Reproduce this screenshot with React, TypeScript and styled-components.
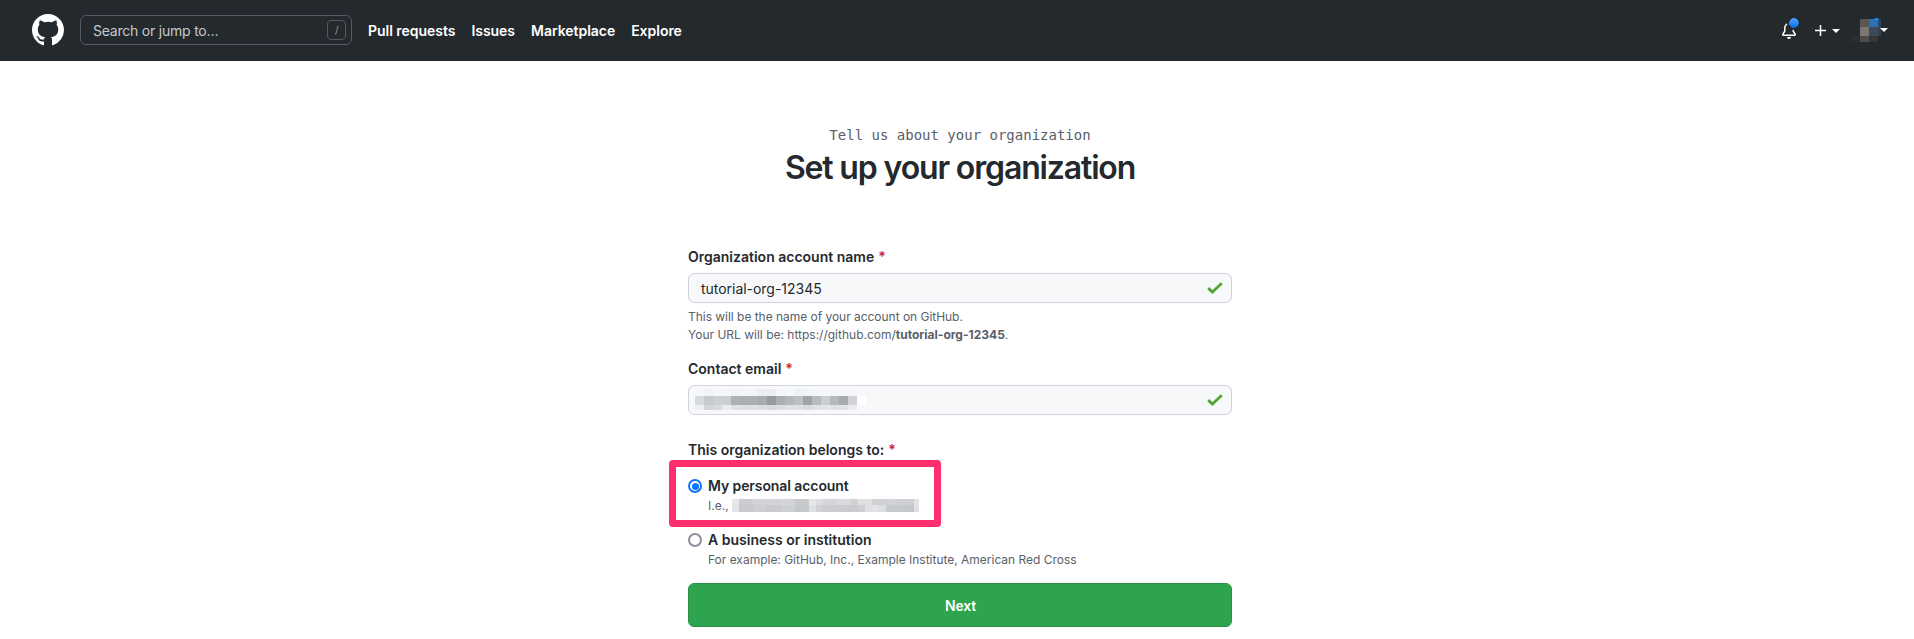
import React from "react";
import styled, { createGlobalStyle } from "styled-components";

const GlobalStyle = createGlobalStyle`
  *, *::before, *::after { box-sizing: border-box; }
  html, body { height: 100%; }
  body {
    margin: 0;
    background: #fff;
    color: #24292e;
    font-family: Inter, "Liberation Sans", sans-serif;
    font-size: 14px;
    line-height: 21px;
    overflow: hidden;
  }
`;

const Header = styled.header`
  display: flex;
  align-items: center;
  height: 61px;
  padding: 0 26px 1px 32px;
  background: #24292e;
  color: #fff;
`;

const Logo = styled.svg`
  display: block;
  width: 32px;
  height: 32px;
  margin-right: 16px;
  fill: #fff;
`;

const SearchBox = styled.div`
  display: flex;
  align-items: center;
  justify-content: space-between;
  width: 272px;
  height: 30px;
  padding: 0 5px 0 12px;
  border: 1px solid #555a68;
  border-radius: 6px;
  color: #c6c8ca;
  letter-spacing: -0.22px;
`;

const SlashKey = styled.span`
  display: flex;
  align-items: center;
  justify-content: center;
  width: 19px;
  height: 20px;
  border: 1px solid #555a60;
  border-radius: 4px;
  color: #85898c;
  font-size: 11px;
`;

const Nav = styled.nav`
  display: flex;
  flex: 1;
  gap: 16px;
  margin-left: 16px;
`;

const NavLink = styled.a`
  font-weight: 600;
  letter-spacing: -0.03px;
`;

const HeaderTools = styled.div`
  display: flex;
  align-items: center;
  padding-top: 2px;
`;

const BellButton = styled.div`
  position: relative;
  width: 16px;
  height: 16px;
  margin-right: 17px;
`;

const UnreadDot = styled.span`
  position: absolute;
  top: -7px;
  right: -4px;
  width: 14px;
  height: 14px;
  border: 2px solid #24292e;
  border-radius: 50%;
  background: linear-gradient(#54a3ff, #006eed);
  background-clip: padding-box;
`;

const Icon = styled.svg`
  display: block;
  fill: currentColor;
`;

const Caret = styled.span`
  border: 4px solid transparent;
  border-top-color: #fff;
  border-bottom: 0;
`;

const PlusMenu = styled.div`
  display: flex;
  align-items: center;
  gap: 5px;
  margin: 0 12px 1px 0;
`;

const AvatarMenu = styled.div`
  position: relative;
  display: flex;
  align-items: center;

  ${Caret} {
    margin: 0 0 2px -1px;
    position: relative;
  }
`;

const AvatarDot = styled.span`
  position: absolute;
  top: -1px;
  left: 22px;
  width: 5px;
  height: 2px;
  border-radius: 3px 3px 0 0;
  background: #2186f5;
`;

const Mosaic = styled.svg`
  display: block;
  flex: none;
`;

const Main = styled.main`
  display: flex;
  flex-direction: column;
  width: 544px;
  margin: 0 auto;
  position: relative;
  left: 3px;
`;

const Eyebrow = styled.p`
  margin: 64px 0 0;
  color: #586069;
  font-family: "DejaVu Sans Mono", monospace;
  text-align: center;
`;

const Title = styled.h1`
  margin: 1px 0 0;
  font-size: 32px;
  font-weight: 600;
  line-height: 42px;
  text-align: center;
  letter-spacing: -1.15px;
`;

const Form = styled.form`
  display: flex;
  flex-direction: column;
  margin-top: 57px;
`;

const Field = styled.div`
  display: flex;
  flex-direction: column;
`;

const Label = styled.label<{ $spacing?: number }>`
  font-weight: 600;
  letter-spacing: ${(p) => p.$spacing ?? 0}px;
`;

const Required = styled.span`
  margin-left: 4px;
  color: #cb2431;
`;

const InputBox = styled.div`
  display: flex;
  align-items: center;
  justify-content: space-between;
  height: 30px;
  margin-top: 6px;
  padding: 0 8px 0 12px;
  border: 1px solid #d1d5da;
  border-radius: 6px;
  background: #f6f8fa;
`;

const RedactedInput = styled(InputBox)`
  padding-left: 6px;
`;

const InputText = styled.span`
  letter-spacing: -0.03px;
`;

const Help = styled.p<{ $spacing?: number }>`
  margin: 0;
  color: #586069;
  font-size: 12px;
  line-height: 18px;
  letter-spacing: ${(p) => p.$spacing ?? 0}px;
`;

const HelpGroup = styled.div`
  margin: 5px 0 14px;
`;

const Question = styled.div`
  margin-top: 24px;
`;

const Choice = styled.div`
  display: flex;
  align-items: flex-start;
  gap: 6px;
  height: 54px;

  ${Help} {
    margin-top: 1px;
  }
`;

const Choices = styled.div`
  margin-top: 15px;
`;

const Highlight = styled.div`
  position: absolute;
  left: -19px;
  top: 399px;
  width: 272px;
  height: 67px;
  border: 7px solid #ff2e6c;
  border-radius: 4px;
`;

const Radio = styled.span<{ $checked?: boolean }>`
  display: flex;
  align-items: center;
  justify-content: center;
  width: 14px;
  height: 14px;
  margin-top: 4px;
  border: 2px solid ${(p) => (p.$checked ? "#0a76ff" : "#8f8f9d")};
  border-radius: 50%;

  &::after {
    content: "";
    width: 7px;
    height: 7px;
    border-radius: 50%;
    background: ${(p) => (p.$checked ? "#0a76ff" : "transparent")};
  }
`;

const RedactedHelp = styled(Help)`
  display: flex;
  gap: 3px;

  ${Mosaic} {
    margin-top: 2px;
  }
`;

const NextButton = styled.button`
  height: 44px;
  padding: 2px 0 0 1px;
  border: 1px solid #2a9147;
  border-radius: 6px;
  background: #2ea44f;
  color: #fff;
  font: 600 14px/20px Inter, "Liberation Sans", sans-serif;
  letter-spacing: -0.15px;
`;

const LOGO =
  "M8 0C3.58 0 0 3.58 0 8c0 3.54 2.29 6.53 5.47 7.59.4.07.55-.17.55-.38 0-.19-.01-.82-.01-1.49-2.01.37-2.53-.49-2.69-.94-.09-.23-.48-.94-.82-1.13-.28-.15-.68-.52-.01-.53.63-.01 1.08.58 1.23.82.72 1.21 1.87.87 2.33.66.07-.52.28-.87.51-1.07-1.78-.2-3.64-.89-3.64-3.95 0-.87.31-1.59.82-2.15-.08-.2-.36-1.02.08-2.12 0 0 .67-.21 2.2.82.64-.18 1.32-.27 2-.27.68 0 1.36.09 2 .27 1.53-1.04 2.2-.82 2.2-.82.44 1.1.16 1.92.08 2.12.51.56.82 1.27.82 2.15 0 3.07-1.87 3.75-3.65 3.95.29.25.54.73.54 1.48 0 1.07-.01 1.93-.01 2.2 0 .21.15.46.55.38A8.013 8.013 0 0016 8c0-4.42-3.58-8-8-8z";

const BELL =
  "M8 16a2 2 0 001.985-1.75c.017-.137-.097-.25-.235-.25h-3.5c-.138 0-.252.113-.235.25A2 2 0 008 16zM8 1.5A3.5 3.5 0 004.5 5v2.947c0 .346-.102.683-.294.97l-1.703 2.556a.018.018 0 00-.003.01l.001.006.004.006.006.004.007.001h10.964l.007-.001.006-.004.004-.006.001-.007a.017.017 0 00-.003-.01l-1.703-2.554a1.75 1.75 0 01-.294-.97V5A3.5 3.5 0 008 1.5zM3 5a5 5 0 0110 0v2.947c0 .05.015.098.042.139l1.703 2.555A1.518 1.518 0 0113.482 13H2.518a1.518 1.518 0 01-1.263-2.36l1.703-2.554A.25.25 0 003 7.947V5z";

type Row = { y: number; h: number; colors: string[] };

function Blocks({ width, height, cell, x = 0, rows }: { width: number; height: number; cell: number; x?: number; rows: Row[] }) {
  return (
    <Mosaic width={width} height={height} shapeRendering="crispEdges">
      {rows.map((row) =>
        row.colors.map((c, i) => (
          <rect key={`${row.y}-${i}`} x={x + i * cell} y={row.y} width={cell} height={row.h} fill={c} />
        ))
      )}
    </Mosaic>
  );
}

const EMAIL_ROWS: Row[] = [
  { y: 0, h: 7, colors: "#f5f7f9 #f1f3f5 #f5f7f9 #f3f5f7 #f1f3f5 #f3f5f7 #f3f5f7 #eeeff1 #ebedef #f4f6f8 #f5f7f9 #edf1f3 #f2f4f6 #f4f6f8 #f5f7f9 #f4f6f8 #f5f7f9 #f5f7f9 #f6f8fa".split(" ") },
  { y: 7, h: 9, colors: "#d8dadc #c7cacd #cdd0d2 #cccdd0 #aeb1b4 #acafb2 #abafb1 #a9acaf #989b9e #abafb2 #b4b8bb #bcc0c3 #a0a4a7 #b8bcbf #cbced1 #b5b9bb #a8abae #d0d2d5 #ffffff".split(" ") },
  { y: 16, h: 5, colors: "#eceef0 #d2d4d6 #d9dbdd #e9ebed #dfe1e3 #dcdee0 #dddfe1 #dadcde #d7d9db #dcdee0 #dfe1e3 #dfe1e3 #d9dbdd #dfe1e3 #e3e5e7 #e0e2e4 #e0e2e4 #e9ebed #f7f9fb".split(" ") },
];

const NAME_ROWS: Row[] = [
  { y: 0, h: 6, colors: "#e6e7e9 #cccdd0 #cccdd0 #d1d3d6 #d1d3d6 #d3d4d7 #cfd1d4 #d3d5d8 #d3d5d8 #c8cace #c9cbcf #e6e7e9 #dcdde0 #d4d6d9 #d2d4d7 #d8dadd #dadce0 #cfd1d5 #dee0e2 #dee0e2 #cfd1d5 #cfd1d5 #d1d3d7 #cfd1d5 #ced0d4 #cdcfd3 #e3e4e7".split(" ") },
  { y: 6, h: 7, colors: "#e3e4e7 #c7c9cd #c7c9cd #cdcfd3 #cdcfd3 #c8cace #c9cbcf #cdcfd2 #cdcfd3 #c3c6ca #c4c7cb #dfe0e3 #cfd1d5 #cbcdd1 #cbcdd1 #c9cbcf #c9cbcf #c9cbcf #cdcfd3 #dedfe2 #e1e2e4 #dbdde0 #c7cace #c6c9cd #c5c8cc #c4c7cb #dfe0e3".split(" ") },
];

function Check() {
  return (
    <Icon width="16" height="12" viewBox="0 0 16 12">
      <path d="M1.2 6.1 L5.4 10 L14.7 1.2" fill="none" stroke="#55a532" strokeWidth="2.8" />
    </Icon>
  );
}

export default function App() {
  return (
    <>
      <GlobalStyle />
      <Header>
        <Logo viewBox="0 0 16 16"><path d={LOGO} /></Logo>
        <SearchBox>
          Search or jump to…
          <SlashKey>/</SlashKey>
        </SearchBox>
        <Nav>
          <NavLink>Pull requests</NavLink>
          <NavLink>Issues</NavLink>
          <NavLink>Marketplace</NavLink>
          <NavLink>Explore</NavLink>
        </Nav>
        <HeaderTools>
          <BellButton>
            <Icon width="16" height="16" viewBox="0 0 16 16"><path d={BELL} /></Icon>
            <UnreadDot />
          </BellButton>
          <PlusMenu>
            <Icon width="13" height="13" viewBox="0 0 13 13"><path d="M5.75 1h1.5v4.75H12v1.5H7.25V12h-1.5V7.25H1v-1.5h4.75z" /></Icon>
            <Caret />
          </PlusMenu>
          <AvatarMenu>
            <Blocks width={29} height={24} cell={9} x={-1} rows={[
              { y: 0, h: 8, colors: ["#25292d", "#5c5650", "#2f6fb7", "#28456a"] },
              { y: 8, h: 9, colors: ["#25292d", "#7b7672", "#3b4a59", "#34414e"] },
              { y: 17, h: 6, colors: ["#2a2e31", "#4a4c4e", "#373835", "#25292d"] },
            ]} />
            <AvatarDot />
            <Caret />
          </AvatarMenu>
        </HeaderTools>
      </Header>
      <Main>
        <Eyebrow>Tell us about your organization</Eyebrow>
        <Title>Set up your organization</Title>
        <Form>
          <Field>
            <Label>Organization account name<Required>*</Required></Label>
            <InputBox><InputText>tutorial-org-12345</InputText><Check /></InputBox>
            <HelpGroup>
              <Help $spacing={-0.03}>This will be the name of your account on GitHub.</Help>
              <Help>Your URL will be: https://github.com/<b>tutorial-org-12345</b>.</Help>
            </HelpGroup>
          </Field>
          <Field>
            <Label>Contact email<Required>*</Required></Label>
            <RedactedInput>
              <Blocks width={172} height={22} cell={9} rows={EMAIL_ROWS} />
              <Check />
            </RedactedInput>
          </Field>
          <Question><Label>This organization belongs to:<Required>*</Required></Label></Question>
          <Choices>
            <Choice>
              <Radio $checked />
              <div>
                <Label $spacing={-0.09}>My personal account</Label>
                <RedactedHelp>I.e.,<Blocks width={187} height={13} cell={7} rows={NAME_ROWS} /></RedactedHelp>
              </div>
            </Choice>
            <Choice>
              <Radio />
              <div>
                <Label>A business or institution</Label>
                <Help $spacing={-0.01}>For example: GitHub, Inc., Example Institute, American Red Cross</Help>
              </div>
            </Choice>
          </Choices>
          <NextButton type="button">Next</NextButton>
        </Form>
        <Highlight />
      </Main>
    </>
  );
}
